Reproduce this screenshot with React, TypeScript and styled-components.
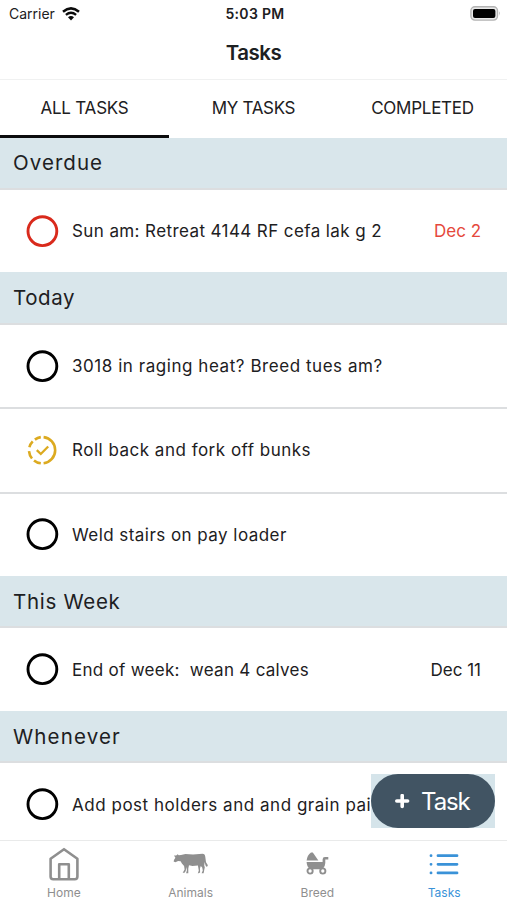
import React from "react";
import styled, { createGlobalStyle } from "styled-components";

const GlobalStyle = createGlobalStyle`
  * { box-sizing: border-box; }
  body { margin: 0; background: #fff; overflow: hidden; }
`;

const Screen = styled.main`
  position: relative;
  display: flex;
  flex-direction: column;
  width: 507px;
  height: 900px;
  overflow: hidden;
  background: #fff;
  color: #1d2022;
  font-family: Inter, "Liberation Sans", sans-serif;
`;

const StatusBar = styled.div`
  display: grid;
  grid-template-columns: 1fr auto 1fr;
  align-items: center;
  height: 27px;
  flex: none;
  padding: 0 6px 0 9px;
  font-size: 14px;
`;

const Carrier = styled.div`
  display: flex;
  align-items: center;
  gap: 7px;
`;

const Clock = styled.div`
  font-weight: 600;
  letter-spacing: 0.3px;
`;

const BatterySlot = styled.div`
  display: flex;
  justify-content: flex-end;
`;

const Fit = styled.span<{ $spacing?: number }>`
  letter-spacing: ${(p) => p.$spacing ?? 0}px;
  white-space: pre;
`;

const TitleBar = styled.h1`
  display: flex;
  align-items: center;
  justify-content: center;
  flex: none;
  height: 53px;
  margin: 0;
  padding-bottom: 2px;
  border-bottom: 1px solid #f0f1f1;
  font-size: 20.5px;
  font-weight: 600;
  letter-spacing: -0.5px;
`;

const Tabs = styled.nav`
  display: grid;
  grid-template-columns: repeat(3, 1fr);
  flex: none;
  height: 57.5px;
`;

const Tab = styled.div<{ $active?: boolean }>`
  display: flex;
  align-items: center;
  justify-content: center;
  border-bottom: 3px solid ${(p) => (p.$active ? "#0b0c0d" : "transparent")};
  padding-top: 2px;
  font-size: 17px;
`;

const List = styled.div`
  flex: 1;
  min-height: 0;
  overflow: hidden;
`;

const SectionHeader = styled.h2`
  display: flex;
  align-items: center;
  height: 50.6px;
  margin: 0;
  padding-left: 13px;
  background: #d9e6eb;
  font-size: 20.5px;
  font-weight: 400;
`;

const Row = styled.div`
  display: flex;
  align-items: center;
  height: 84.3px;
  padding: 0 26px;
  border-top: 2px solid #dcdee0;
  font-size: 17px;
  white-space: nowrap;
`;

const Marker = styled.div`
  flex: none;
  width: 46px;
  height: 33px;
`;

const Due = styled.div<{ $late?: boolean }>`
  margin-left: auto;
  color: ${(p) => (p.$late ? "#e5483c" : "#1d2022")};
`;

const AddArea = styled.div`
  position: absolute;
  left: 371px;
  top: 774px;
  width: 124px;
  height: 54px;
  background: #d5e4ea;
`;

const AddButton = styled.button`
  display: flex;
  align-items: center;
  gap: 11px;
  width: 100%;
  height: 100%;
  padding: 0 0 0 24px;
  border: 0;
  border-radius: 27px;
  background: #415463;
  color: #fff;
  font-family: inherit;
  font-size: 24px;
  letter-spacing: -1.1px;
`;

const BottomBar = styled.nav`
  display: grid;
  grid-template-columns: repeat(4, 1fr);
  flex: none;
  height: 60px;
  border-top: 1px solid #e9eaea;
  background: #fff;
`;

const BottomItem = styled.div<{ $active?: boolean }>`
  display: flex;
  flex-direction: column;
  align-items: center;
  padding-left: 1px;
  color: ${(p) => (p.$active ? "#3a92d8" : "#8f8f8f")};
  font-size: 12px;
  line-height: 14px;
`;

const IconSlot = styled.div`
  display: flex;
  align-items: center;
  justify-content: center;
  height: 45px;
  flex: none;
`;

const WifiIcon = () => (
  <svg width="18" height="14" viewBox="0 0 18 14" fill="none" stroke="#0b0b0b">
    <path d="M1 4.7Q9-2 17 4.7" strokeWidth="2.5" />
    <path d="M3.9 7.8Q9 3.6 14.1 7.8" strokeWidth="2.3" />
    <path d="M6 10.2Q9 7.7 12 10.2L9 13.4Z" fill="#0b0b0b" stroke="none" />
  </svg>
);

const BatteryIcon = () => (
  <svg width="31" height="16" viewBox="0 0 31 16">
    <rect x="0.9" y="0.8" width="26.6" height="13.3" rx="4" fill="#e9e9e9" stroke="#b3b3b3" strokeWidth="1.4" />
    <rect x="3" y="2.9" width="22.4" height="9.2" rx="2" fill="#000" />
    <path d="M29 5.3q1.7 2.2 0 4.4z" fill="#a5a5a5" />
  </svg>
);

const OpenCircle = ({ color }: { color: string }) => (
  <svg width="33" height="33" viewBox="0 0 33 33">
    <circle cx="16.4" cy="16.2" r="14.4" fill="none" stroke={color} strokeWidth="2.9" />
  </svg>
);

const ProgressCheck = () => (
  <svg width="33" height="33" viewBox="0 0 33 33" fill="none" stroke="#dcaa20" strokeWidth="2.6">
    <path d="M17.6 3.1A13.2 13.2 0 0 1 17.6 29.3" />
    <path d="M14.8 3.1A13.2 13.2 0 0 0 8.9 5.6M6.7 7.3A13.2 13.2 0 0 0 3.4 13.2M3 17.2A13.2 13.2 0 0 0 6 24.5M8 26.4A13.2 13.2 0 0 0 14.8 29.3" />
    <path d="M10.8 16.1L14.8 20L22.2 12.5" strokeWidth="2.3" />
  </svg>
);

const PlusIcon = () => (
  <svg width="15" height="15" viewBox="0 0 15 15" stroke="currentColor" strokeWidth="3.6" strokeLinecap="round">
    <path d="M1.8 7H12.6M7.2 1.6V12.4" />
  </svg>
);

const HomeIcon = () => (
  <svg width="32" height="34" viewBox="0 0 32 34" fill="none" stroke="currentColor" strokeWidth="2.6" strokeLinejoin="round">
    <path d="M2.6 11.7L16 2.2L29.4 11.7V29.4Q29.4 32.2 26.7 32.2H5.3Q2.6 32.2 2.6 29.4Z" />
    <path d="M11.2 32V17.2H20.8V32" />
  </svg>
);

const CowIcon = () => (
  <svg width="36" height="22" viewBox="0 0 36 22" fill="currentColor">
    <path d="M1 2.4L3.2 2.6L4.6 1.2L5.8 2.3L8 1.9L12.5 .9L20 1.4L29.5 .8Q32 .9 32.3 4L33 9.3L34.9 12.2L33.9 14L32.5 12.6L31.7 9L31.2 12.4L31.8 14.2L30.6 20.2H28.6L29.8 17.4L29.2 14.6L27.8 12.9L27 15.2L27.1 19.6L24.8 20.4L25.8 17.4L24.9 12.4L19.4 13L16 12.2L15.3 15.5L15.3 20.3H13.1L13.9 17.4L13.4 14L12.7 18L11.5 19.8H9.7L11.6 16.6L11.1 12.9L8.9 10.6L7.6 8.2L5.1 7.9L2.4 9.2L.6 8.4L1.1 6.7L2.4 4.7Z" />
  </svg>
);

const CarriageIcon = () => (
  <svg width="23" height="23" viewBox="0 0 23 23" fill="currentColor">
    <path d="M.6 8.6Q1.2 3 5 .4L6.8.6L12.4 8.6Z" />
    <path d="M.6 9.9H16.6V7.4Q16.6 5 19 5H22.3V7.6H19.3V11Q19.3 14.3 16.6 17.2H4Q.8 14.6.6 9.9Z" />
    <circle cx="4.1" cy="19" r="2.6" fill="#fff" stroke="currentColor" strokeWidth="1.9" />
    <circle cx="16.8" cy="19" r="2.6" fill="#fff" stroke="currentColor" strokeWidth="1.9" />
  </svg>
);

const TasksIcon = () => (
  <svg width="30" height="22" viewBox="0 0 30 22" stroke="currentColor" strokeWidth="2.8" strokeLinecap="round">
    <path d="M9 2.7H28M9 11.3H28M9 19.9H28" />
    <path d="M2 2.7H2.05M2 11.3H2.05M2 19.9H2.05" />
  </svg>
);

type Task = { text: string; spacing: number; due?: string; late?: boolean; started?: boolean };

const sections: { name: string; spacing: number; tasks: Task[] }[] = [
  {
    name: "Overdue",
    spacing: 1.05,
    tasks: [{ text: "Sun am: Retreat 4144 RF cefa lak g 2", spacing: 0.4, due: "Dec 2", late: true }],
  },
  {
    name: "Today",
    spacing: 0.55,
    tasks: [
      { text: "3018 in raging heat? Breed tues am?", spacing: 0.55 },
      { text: "Roll back and fork off bunks", spacing: 0.5, started: true },
      { text: "Weld stairs on pay loader", spacing: 0.45 },
    ],
  },
  {
    name: "This Week",
    spacing: 0.7,
    tasks: [{ text: "End of week:  wean 4 calves", spacing: 0.28, due: "Dec 11" }],
  },
  {
    name: "Whenever",
    spacing: 1.15,
    tasks: [{ text: "Add post holders and and grain pails", spacing: 0.53 }],
  },
];

export default function App() {
  return (
    <Screen>
      <GlobalStyle />
      <StatusBar>
        <Carrier>
          <span>Carrier</span>
          <WifiIcon />
        </Carrier>
        <Clock>5:03 PM</Clock>
        <BatterySlot>
          <BatteryIcon />
        </BatterySlot>
      </StatusBar>
      <TitleBar>Tasks</TitleBar>
      <Tabs>
        <Tab $active>
          <Fit $spacing={-0.22}>ALL TASKS</Fit>
        </Tab>
        <Tab>
          <Fit $spacing={-0.32}>MY TASKS</Fit>
        </Tab>
        <Tab>
          <Fit $spacing={-0.25}>COMPLETED</Fit>
        </Tab>
      </Tabs>
      <List>
        {sections.map((section) => (
          <section key={section.name}>
            <SectionHeader>
              <Fit $spacing={section.spacing}>{section.name}</Fit>
            </SectionHeader>
            {section.tasks.map((task) => (
              <Row key={task.text}>
                <Marker>
                  {task.started ? <ProgressCheck /> : <OpenCircle color={task.late ? "#d92a1c" : "#000"} />}
                </Marker>
                <Fit $spacing={task.spacing}>{task.text}</Fit>
                {task.due && <Due $late={task.late}>{task.due}</Due>}
              </Row>
            ))}
          </section>
        ))}
      </List>
      <BottomBar>
        <BottomItem>
          <IconSlot>
            <HomeIcon />
          </IconSlot>
          Home
        </BottomItem>
        <BottomItem>
          <IconSlot>
            <CowIcon />
          </IconSlot>
          Animals
        </BottomItem>
        <BottomItem>
          <IconSlot>
            <CarriageIcon />
          </IconSlot>
          Breed
        </BottomItem>
        <BottomItem $active>
          <IconSlot>
            <TasksIcon />
          </IconSlot>
          Tasks
        </BottomItem>
      </BottomBar>
      <AddArea>
        <AddButton>
          <PlusIcon />
          <span>Task</span>
        </AddButton>
      </AddArea>
    </Screen>
  );
}
